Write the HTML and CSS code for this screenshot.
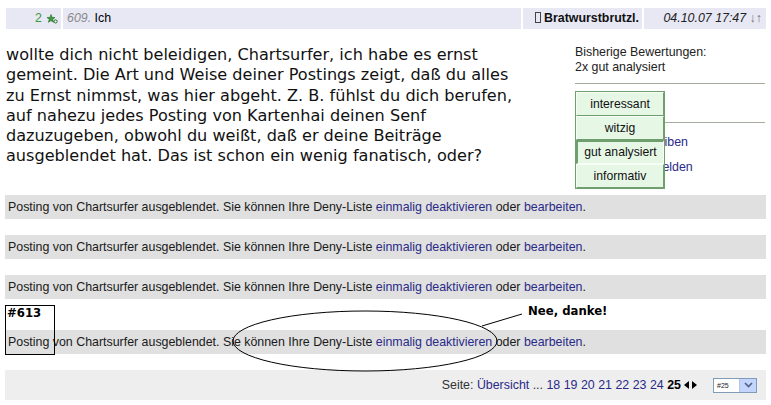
FILE: index.html
```html
<!DOCTYPE html>
<html lang="de">
<head>
<meta charset="utf-8">
<title>Forum</title>
<link rel="stylesheet" href="styles.css">
</head>
<body>
<div class="page">
  <div class="head">
    <div class="h-score">2 <svg class="star" width="11" height="10" viewBox="0 0 11 10"><path d="M4 0.5 L5.1 3.4 L8 3.5 L5.7 5.3 L6.6 8.3 L4 6.6 L1.4 8.3 L2.3 5.3 L0 3.5 L2.9 3.4 Z" fill="#3c9a3c" stroke="#1d6a1d" stroke-width="0.6"/><circle cx="8.6" cy="7.4" r="1.6" fill="none" stroke="#1d6a1d" stroke-width="0.9"/></svg></div>
    <div class="h-title"><span class="num">609.</span> Ich</div>
    <div class="h-author"><span class="box"></span> Bratwurstbrutzl.</div>
    <div class="h-date"><span class="dt">04.10.07 17:47</span> <span class="arr">↓↑</span></div>
  </div>

  <div class="post">
    <div class="post-text">wollte dich nicht beleidigen, Chartsurfer, ich habe es ernst<br>gemeint. Die Art und Weise deiner Postings zeigt, daß du alles<br>zu Ernst nimmst, was hier abgeht. Z. B. fühlst du dich berufen,<br>auf nahezu jedes Posting von Kartenhai deinen Senf<br>dazuzugeben, obwohl du weißt, daß er deine Beiträge<br>ausgeblendet hat. Das ist schon ein wenig fanatisch, oder?</div>
    <div class="side">
      <div class="ratings">Bisherige Bewertungen:<br>2x gut analysiert</div>
      <div class="rule rule-1"></div>
      <div class="rule rule-2"></div>
      <a class="side-link first" href="#">Antworten schreiben</a>
      <a class="side-link" href="#">Regelverstoß melden</a>
      <div class="menu">
        <div class="mbtn">interessant</div>
        <div class="mbtn">witzig</div>
        <div class="mbtn pressed">gut analysiert</div>
        <div class="mbtn">informativ</div>
      </div>
    </div>
  </div>

  <div class="hidden">Posting von Chartsurfer ausgeblendet. Sie können Ihre Deny-Liste <a href="#">einmalig deaktivieren</a> oder <a href="#">bearbeiten</a>.</div>
  <div class="hidden">Posting von Chartsurfer ausgeblendet. Sie können Ihre Deny-Liste <a href="#">einmalig deaktivieren</a> oder <a href="#">bearbeiten</a>.</div>
  <div class="hidden gap-after">Posting von Chartsurfer ausgeblendet. Sie können Ihre Deny-Liste <a href="#">einmalig deaktivieren</a> oder <a href="#">bearbeiten</a>.</div>
  <div class="hidden">Posting von Chartsurfer ausgeblendet. Sie können Ihre Deny-Liste <a href="#">einmalig deaktivieren</a> oder <a href="#">bearbeiten</a>.</div>

  <div class="pager">
    <span class="pages">Seite: <a href="#">Übersicht</a> ... <a href="#">18</a> <a href="#">19</a> <a href="#">20</a> <a href="#">21</a> <a href="#">22</a> <a href="#">23</a> <a href="#">24</a> <b>25</b><span class="tri"><svg width="13" height="8" viewBox="0 0 13 8"><path d="M5 0 L5 8 L0 4 Z" fill="#000"/><path d="M8 0 L8 8 L13 4 Z" fill="#000"/></svg></span></span>
    <div class="sel"><span class="sel-val">#25</span><span class="sel-btn"><svg width="9" height="6" viewBox="0 0 9 6"><path d="M1 1 L4.5 4.5 L8 1" fill="none" stroke="#4d6185" stroke-width="1.6"/></svg></span></div>
  </div>
</div>

<div class="note-box"><span>#613</span></div>
<svg class="note-ellipse" width="300" height="80" viewBox="0 0 300 80">
  <ellipse cx="135" cy="42" rx="132" ry="30" fill="none" stroke="#000" stroke-width="1"/>
  <path d="M252 27 L292 15" stroke="#000" stroke-width="1"/>
</svg>
<div class="note-text">Nee, danke!</div>
</body>
</html>
```
FILE: styles.css
```css
html, body {
  margin: 0;
  padding: 0;
  background: #fff;
}
body {
  font-family: "Liberation Sans", Arial, sans-serif;
  font-size: 12.4px;
  color: #1a1a1a;
  position: relative;
  width: 771px;
  height: 405px;
  overflow: hidden;
}
a {
  color: #2a2a88;
  text-decoration: none;
}
.page {
  padding: 8px 5px 0 6px;
}

/* header */
.head {
  display: grid;
  grid-template-columns: 55px 1fr 119px 122px;
  column-gap: 2px;
  height: 21px;
  line-height: 21px;
}
.head > div {
  background: #e8e8f5;
}
.h-score {
  color: #3a9a3a;
  padding-right: 3px;
  display: flex;
  justify-content: flex-end;
  align-items: center;
  gap: 5px;
}
.star { display: block; }
.h-title {
  padding-left: 4px;
  color: #000;
}
.num {
  color: #8a8a8a;
  font-style: italic;
}
.h-author {
  text-align: right;
  padding-right: 3px;
  font-weight: bold;
  color: #111;
}
.box {
  display: inline-block;
  width: 4px;
  height: 9px;
  border: 1px solid #444;
  vertical-align: -1px;
}
.h-date {
  text-align: right;
  padding-right: 4px;
}
.dt {
  font-style: italic;
  color: #222;
}
.arr {
  color: #777;
}

/* post */
.post {
  display: flex;
  margin-top: 16px;
  height: 150px;
}
.post-text {
  width: 569px;
  font-family: "DejaVu Sans", Verdana, sans-serif;
  font-size: 16.1px;
  line-height: 20.3px;
  color: #111;
  white-space: nowrap;
}
.side {
  position: relative;
  width: 190px;
  display: flex;
  flex-direction: column;
}
.ratings {
  line-height: 15px;
  color: #222;
}
.rule {
  height: 1px;
  background: #a4ab9f;
}
.rule-1 { margin-top: 8px; }
.rule-2 { margin-top: 38px; }
.side-link {
  line-height: 15px;
  margin-top: 10px;
  white-space: nowrap;
}
.side-link.first { margin-top: 12px; }

.menu {
  position: absolute;
  left: 0;
  top: 46px;
  width: 88px;
  border: 1px solid #6f9f6f;
  background: #e6f7e6;
}
.mbtn {
  height: 22px;
  line-height: 22px;
  text-align: center;
  font-size: 12.2px;
  color: #111;
  background: #e6f7e6;
  border: 1px solid;
  border-color: #f6fff6 #6f9f6f #6f9f6f #f6fff6;
}
.mbtn.pressed {
  border-width: 2px 1px 1px 2px;
  height: 21px;
  line-height: 21px;
  border-color: #6f9f6f #f6fff6 #f6fff6 #6f9f6f;
}

/* hidden postings */
.hidden {
  height: 24px;
  line-height: 24px;
  background: #e0e0e0;
  margin-bottom: 16px;
  padding-left: 3px;
  margin-left: -1px;
  color: #1a1a1a;
  white-space: nowrap;
}
.hidden.gap-after { margin-bottom: 31px; }

/* pager */
.pager {
  margin-left: -1px;
  height: 30px;
  background: #eeeeee;
  display: flex;
  justify-content: flex-end;
  align-items: center;
  padding-right: 9px;
  color: #333;
}
.pages { white-space: nowrap; }
.pager a { color: #2a2a88; }
.pager b { color: #000; }
.tri {
  display: inline-block;
  margin-left: 3px;
}
.tri svg { display: inline-block; }
.sel {
  margin-left: 16px;
  width: 42px;
  height: 13px;
  border: 1px solid #7f9db9;
  background: #fff;
  display: flex;
  align-items: stretch;
}
.sel-val {
  flex: 1;
  font-size: 7px;
  line-height: 13px;
  padding-left: 3px;
  color: #222;
}
.sel-btn {
  width: 16px;
  background: #c3d5fc;
  border-left: 1px solid #b0c4ee;
  display: flex;
  align-items: center;
  justify-content: center;
}

/* annotations */
.note-box {
  position: absolute;
  left: 5px;
  top: 305px;
  width: 48px;
  height: 48px;
  border: 1px solid #000;
}
.note-box span,
.note-text {
  font-family: "Liberation Sans Narrow", "DejaVu Sans Condensed", sans-serif;
  font-stretch: condensed;
  font-weight: bold;
  color: #000;
}
.note-box span {
  position: absolute;
  left: 1px;
  top: 0;
  font-size: 13px;
  line-height: 14px;
}
.note-ellipse {
  position: absolute;
  left: 230px;
  top: 299px;
}
.note-text {
  position: absolute;
  left: 528px;
  top: 303px;
  font-size: 13px;
  line-height: 15px;
}
```
